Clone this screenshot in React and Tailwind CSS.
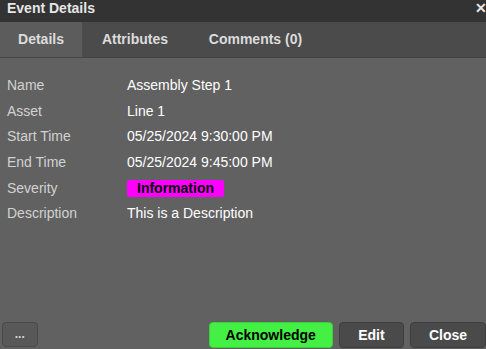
export default function App() {
    const rows = [
        ["Name", "Assembly Step 1"],
        ["Asset", "Line 1"],
        ["Start Time", "05/25/2024 9:30:00 PM"],
        ["End Time", "05/25/2024 9:45:00 PM"],
        ["Severity", null],
        ["Description", "This is a Description"],
    ];

    return (
        <div className="w-[486px] h-[349px] flex flex-col overflow-hidden bg-[#616161] font-['Liberation_Sans',Arial,sans-serif]">
            <div className="h-[22px] bg-[#333333] flex items-start justify-between pl-[7px] pt-[1px] shrink-0">
                <span className="text-[14px] leading-[14px] font-bold text-[#e6e6e6]">Event Details</span>
                <span className="text-[14px] leading-[14px] font-bold text-[#e6e6e6] mr-[-1px]">✕</span>
            </div>

            <div className="h-[36px] bg-[#4b4b4b] border-b border-[#454545] flex shrink-0">
                <div className="w-[82px] bg-[#5c5c5c] flex items-center justify-center text-[14px] font-bold text-[#dcdcdc]">
                    Details
                </div>
                <div className="w-[106px] flex items-center justify-center text-[14px] font-bold text-[#dcdcdc]">
                    Attributes
                </div>
                <div className="w-[135px] flex items-center justify-center text-[14px] font-bold text-[#dcdcdc]">
                    Comments (0)
                </div>
            </div>

            <div className="flex-1 pt-[15px] pl-[7px]">
                {rows.map(([label, value]) => (
                    <div key={label} className="h-[25.6px] flex items-center text-[14px]">
                        <div className="w-[120px] text-[#d2d2d2]">{label}</div>
                        {value ? (
                            <div className="text-white">{value}</div>
                        ) : (
                            <div className="w-[97px] h-[17px] bg-[#ff00ff] rounded-[2px] flex items-center justify-center text-[14px] font-bold text-black">
                                Information
                            </div>
                        )}
                    </div>
                ))}
            </div>

            <div className="h-[27px] flex items-start pl-[2px] pb-[2px] shrink-0">
                <button className="w-[36px] h-[25px] bg-[#585858] border border-[#4a4a4a] rounded-[4px] text-[#d8d8d8] text-[12px] font-bold leading-none pb-[2px]">
                    ...
                </button>
                <button className="ml-[171px] w-[126px] h-[26px] bg-[#44f044] border border-[#3ad03a] rounded-[4px] text-[14px] font-bold text-black">
                    Acknowledge
                </button>
                <button className="ml-[6px] w-[66px] h-[26px] bg-[#4a4a4a] border border-[#3e3e3e] rounded-[4px] text-[14px] font-bold text-white">
                    Edit
                </button>
                <button className="ml-[6px] w-[76px] h-[26px] shrink-0 bg-[#4a4a4a] border border-[#3e3e3e] rounded-[4px] text-[14px] font-bold text-white">
                    Close
                </button>
            </div>
        </div>
    );
}
